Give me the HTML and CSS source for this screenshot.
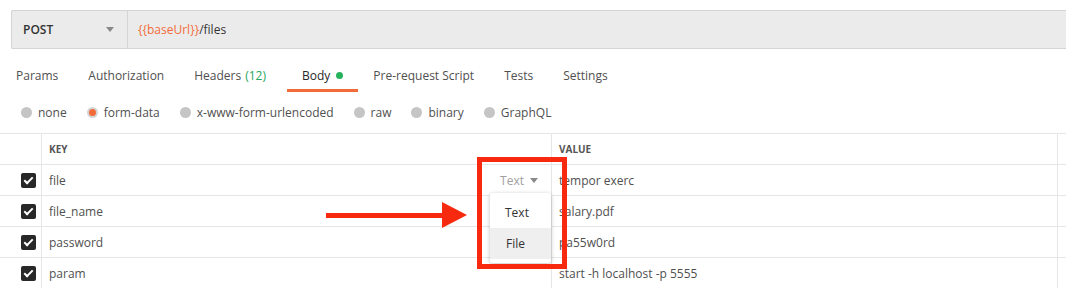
FILE: index.html
```html
<!DOCTYPE html>
<html lang="en">
<head>
    <meta charset="UTF-8">
    <title>Request Body</title>
    <link rel="stylesheet" href="styles.css">
</head>
<body>
    <div class="url-bar">
        <div class="method">
            <span>POST</span>
            <span class="caret"></span>
        </div>
        <div class="url"><span class="var">{{baseUrl}}</span>/files</div>
    </div>

    <div class="tabs">
        <div class="tab">Params</div>
        <div class="tab">Authorization</div>
        <div class="tab">Headers <span class="count">(12)</span></div>
        <div class="tab active">Body <span class="dot"></span></div>
        <div class="tab">Pre-request Script</div>
        <div class="tab">Tests</div>
        <div class="tab">Settings</div>
    </div>

    <div class="body-types">
        <label class="radio"><span class="circle"></span>none</label>
        <label class="radio"><span class="circle checked"></span>form-data</label>
        <label class="radio"><span class="circle"></span>x-www-form-urlencoded</label>
        <label class="radio"><span class="circle"></span>raw</label>
        <label class="radio"><span class="circle"></span>binary</label>
        <label class="radio"><span class="circle"></span>GraphQL</label>
    </div>

    <div class="table">
        <div class="row header-row">
            <div class="cell check"></div>
            <div class="cell key">KEY</div>
            <div class="cell value">VALUE</div>
            <div class="cell rest"></div>
        </div>
        <div class="row">
            <div class="cell check"><span class="box"></span></div>
            <div class="cell key">file
                <span class="type">Text <span class="caret"></span></span>
            </div>
            <div class="cell value">tempor exerc</div>
            <div class="cell rest"></div>
        </div>
        <div class="row">
            <div class="cell check"><span class="box"></span></div>
            <div class="cell key">file_name</div>
            <div class="cell value">salary.pdf</div>
            <div class="cell rest"></div>
        </div>
        <div class="row">
            <div class="cell check"><span class="box"></span></div>
            <div class="cell key">password</div>
            <div class="cell value">pa55w0rd</div>
            <div class="cell rest"></div>
        </div>
        <div class="row">
            <div class="cell check"><span class="box"></span></div>
            <div class="cell key">param</div>
            <div class="cell value">start -h localhost -p 5555</div>
            <div class="cell rest"></div>
        </div>

        <!-- type dropdown, opened -->
        <div class="menu">
            <div class="menu-item">Text</div>
            <div class="menu-item hover">File</div>
        </div>

        <!-- annotation -->
        <div class="highlight"></div>
        <div class="pointer">
            <span class="shaft"></span>
            <span class="tip"></span>
        </div>
    </div>
</body>
</html>
```

FILE: styles.css
```css
body {
    font-family: "Open Sans", "Liberation Sans", sans-serif;
    font-size: 12px;
    color: #505050;
    margin: 0;
    padding: 0;
    background-color: #fff;
    overflow: hidden;
}
.url-bar {
    display: flex;
    height: 37px;
    margin: 10px 0 0 11px;
    background-color: #ebebeb;
    border: 1px solid #d4d4d4;
    border-right: none;
    border-radius: 2px 0 0 2px;
}
.method {
    width: 104px;
    padding-left: 11px;
    display: flex;
    align-items: center;
    justify-content: space-between;
    font-weight: 600;
    color: #333;
    border-right: 1px solid #d4d4d4;
    box-sizing: content-box;
}
.method .caret {
    margin-right: 13px;
}
.caret {
    display: inline-block;
    width: 0;
    height: 0;
    border-left: 4px solid transparent;
    border-right: 4px solid transparent;
    border-top: 5px solid #888;
}
.url {
    display: flex;
    align-items: center;
    padding-left: 10px;
    color: #333;
}
.var {
    color: #f26b3a;
}
.tabs {
    display: flex;
    margin-top: 13px;
    padding-left: 1px;
}
.tab {
    height: 27px;
    padding: 0 15px;
    display: flex;
    align-items: center;
    border-bottom: 3px solid transparent;
    color: #505050;
}
.tab.active {
    margin-left: 6px;
    color: #282828;
    border-bottom-color: #f26b3a;
}
.count {
    color: #26a65b;
    margin-left: 4px;
}
.dot {
    display: inline-block;
    width: 7px;
    height: 7px;
    border-radius: 50%;
    background-color: #26b15b;
    margin-left: 6px;
}
.body-types {
    display: flex;
    gap: 20px;
    padding-left: 21px;
    height: 41px;
    align-items: center;
}
.radio {
    display: flex;
    align-items: center;
    gap: 6px;
    color: #505050;
}
.circle {
    width: 11px;
    height: 11px;
    border-radius: 50%;
    background-color: #c5c5c5;
    position: relative;
}
.circle.checked {
    background-color: #d5d5d5;
}
.circle.checked::after {
    content: "";
    position: absolute;
    top: 2px;
    left: 2px;
    width: 7px;
    height: 7px;
    border-radius: 50%;
    background-color: #f26b3a;
}
.table {
    position: relative;
    border-top: 1px solid #e6e6e6;
}
.row {
    display: grid;
    grid-template-columns: 41px 510px 506px 1fr;
    height: 31px;
    border-bottom: 1px solid #e6e6e6;
    box-sizing: border-box;
}
.cell {
    display: flex;
    align-items: center;
    padding-left: 7px;
    border-left: 1px solid #e6e6e6;
    color: #505050;
}
.cell.check {
    border-left: none;
    padding-left: 21px;
}
.header-row .cell {
    font-size: 10px;
    font-weight: 700;
    color: #555;
}
.box {
    width: 15px;
    height: 15px;
    border-radius: 2px;
    background-color: #282828;
    position: relative;
}
.box::after {
    content: "";
    position: absolute;
    left: 5px;
    top: 2px;
    width: 3px;
    height: 7px;
    border: solid #fff;
    border-width: 0 2px 2px 0;
    transform: rotate(45deg);
}
.cell.key {
    justify-content: space-between;
    padding-right: 13px;
}
.type {
    color: #a0a0a0;
    display: flex;
    align-items: center;
    gap: 6px;
}
.menu {
    position: absolute;
    left: 490px;
    top: 59px;
    width: 61px;
    padding: 4px 0;
    background-color: #fff;
    border-radius: 3px;
    box-shadow: 0 1px 4px rgba(0, 0, 0, 0.25);
}
.menu-item {
    height: 31px;
    line-height: 31px;
    padding-left: 15px;
    color: #333;
}
.menu-item.hover {
    background-color: #efefef;
    padding-left: 16px;
}
.highlight {
    position: absolute;
    left: 477px;
    top: 23px;
    width: 80px;
    height: 102px;
    border: 5px solid #f72a10;
}
.pointer {
    position: absolute;
    left: 326px;
    top: 68px;
    display: flex;
    align-items: center;
}
.shaft {
    width: 116px;
    height: 5px;
    background-color: #f72a10;
}
.tip {
    width: 0;
    height: 0;
    border-top: 13px solid transparent;
    border-bottom: 13px solid transparent;
    border-left: 25px solid #f72a10;
}
```
